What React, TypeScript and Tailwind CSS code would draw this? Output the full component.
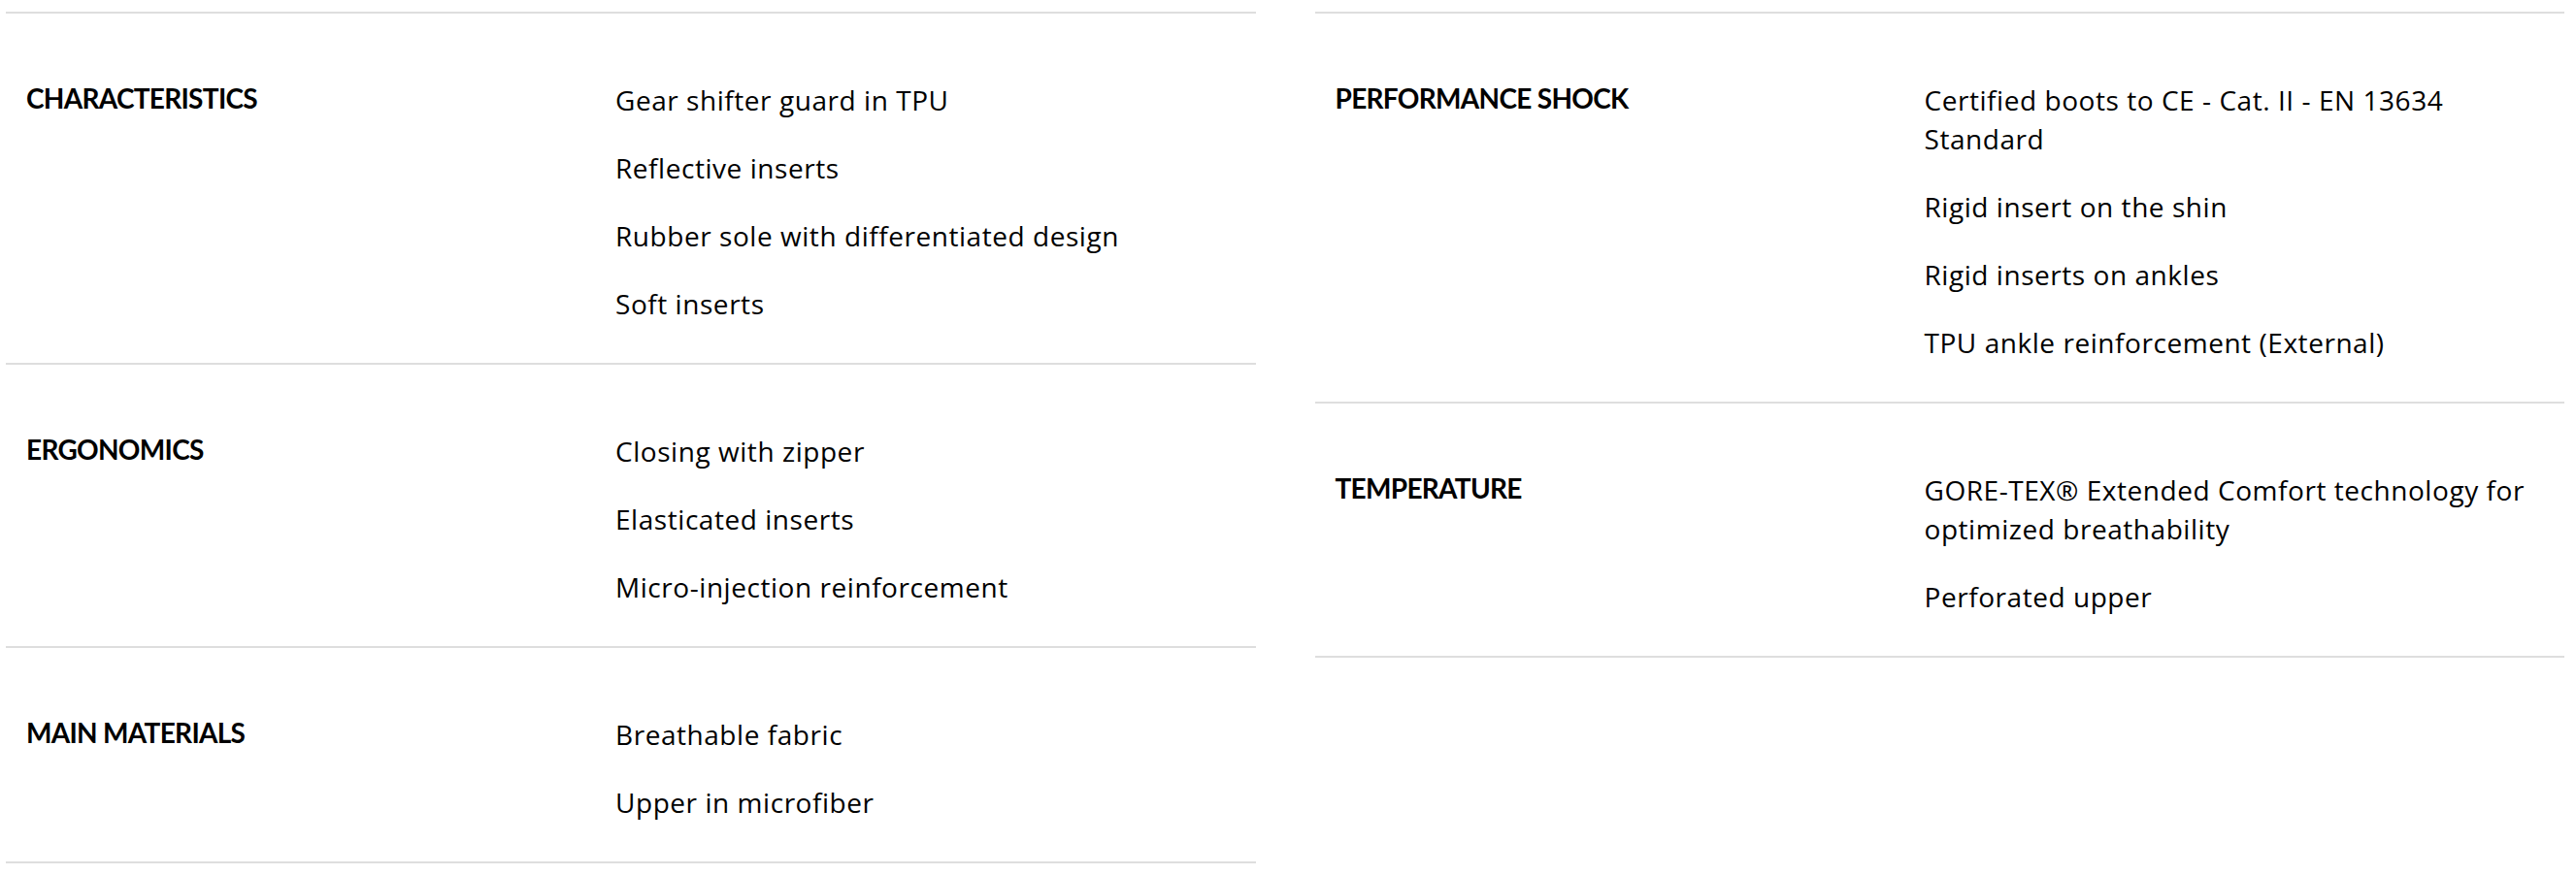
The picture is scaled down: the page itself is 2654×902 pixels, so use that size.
const leftGroups = [
  {
    title: "CHARACTERISTICS",
    items: [
      "Gear shifter guard in TPU",
      "Reflective inserts",
      "Rubber sole with differentiated design",
      "Soft inserts",
    ],
  },
  {
    title: "ERGONOMICS",
    items: ["Closing with zipper", "Elasticated inserts", "Micro-injection reinforcement"],
  },
  {
    title: "MAIN MATERIALS",
    items: ["Breathable fabric", "Upper in microfiber"],
  },
];

const rightGroups = [
  {
    title: "PERFORMANCE SHOCK",
    items: [
      "Certified boots to CE - Cat. II - EN 13634 Standard",
      "Rigid insert on the shin",
      "Rigid inserts on ankles",
      "TPU ankle reinforcement (External)",
    ],
  },
  {
    title: "TEMPERATURE",
    items: [
      "GORE-TEX® Extended Comfort technology for optimized breathability",
      "Perforated upper",
    ],
  },
];

function SpecRow({ title, items }: { title: string; items: string[] }) {
  return (
    <div className="grid grid-cols-[607px_1fr] border-t-2 border-[#dedede] pl-[21px] pt-[69px] pb-[41px]">
      <h3 className="-mt-[2px] font-['Lato',sans-serif] text-[28px] leading-[40px] font-bold tracking-[-0.7px] uppercase">
        {title}
      </h3>
      <ul className="flex flex-col gap-[30px] pr-[24px] font-['Open_Sans',sans-serif]">
        {items.map((item) => (
          <li key={item} className="text-[28px] leading-[40px] tracking-[0.55px]">
            {item}
          </li>
        ))}
      </ul>
    </div>
  );
}

function SpecColumn({ groups }: { groups: { title: string; items: string[] }[] }) {
  return (
    <div className="border-b-2 border-[#dedede] self-start">
      {groups.map((g) => (
        <SpecRow key={g.title} title={g.title} items={g.items} />
      ))}
    </div>
  );
}

export default function App() {
  return (
    <div className="min-h-[902px] bg-white text-black pt-[12px] pl-[6px] pr-[12px] font-['Lato',sans-serif]">
      <div className="grid grid-cols-2 gap-[61px]">
        <SpecColumn groups={leftGroups} />
        <SpecColumn groups={rightGroups} />
      </div>
    </div>
  );
}
